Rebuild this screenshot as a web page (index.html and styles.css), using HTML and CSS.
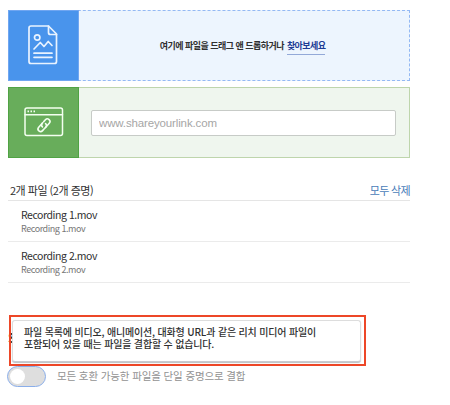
FILE: index.html
```html
<!DOCTYPE html>
<html lang="ko">
<head>
<meta charset="utf-8">
<title>파일 추가</title>
<link rel="stylesheet" href="styles.css">
</head>
<body>
<main class="panel">
  <section class="source source-file">
    <div class="source-icon">
      <svg width="30" height="40" viewBox="0 0 30 40" fill="none" stroke="#e9f3ff" stroke-width="1.7" stroke-linejoin="round" stroke-linecap="round">
        <path d="M3 1H20.500L28.500 9V36.500Q28.500 38.500 26.500 38.500H3Q1 38.500 1 36.500V3Q1 1 3 1Z"/>
        <path d="M20.500 1V7.500Q20.500 9.500 22.500 9.500H28.500"/>
        <circle cx="9.200" cy="12.500" r="2.700"/>
        <path d="M6 24L12.300 17.500L16 21.500L20.200 16.500L24 20.500M6 28.200H24M6 32.300H24"/>
      </svg>
    </div>
    <p class="drop-text"><span class="drop-label">여기에 파일을 드래그 앤 드롭하거나</span><a class="browse">찾아보세요</a></p>
  </section>
  <section class="source source-link">
    <div class="source-icon">
      <svg width="40" height="30" viewBox="0 0 40 30" fill="none" stroke="#f3fff0" stroke-width="1.500" stroke-linejoin="round" stroke-linecap="round">
        <rect x="1" y="1" width="37.500" height="27.500" rx="2"/>
        <path d="M1 7.700H38.500"/>
        <path d="M3.500 4.400H5M6.500 4.400H8M9.500 4.400H11" stroke-linecap="butt" stroke-width="1.800"/>
        <g transform="translate(20 18.200) rotate(-48)">
          <path d="M1 -2.600H-5A2.600 2.600 0 0 0 -5 2.600H-2.500M-1 2.600H0A2.600 2.600 0 0 0 2.300 0" stroke-width="1.600"/>
          <path d="M-1 2.600H5A2.600 2.600 0 0 0 5 -2.600H2.500M-2.300 0A2.600 2.600 0 0 1 0 -2.600" stroke-width="1.600"/>
        </g>
      </svg>
    </div>
    <div class="link-area"><input class="link-input" type="text" placeholder="www.shareyourlink.com"></div>
  </section>
  <header class="list-header"><span class="count">2개 파일 (2개 증명)</span><a class="delete-all">모두 삭제</a></header>
  <ul class="files">
    <li class="file"><span class="name">Recording 1.mov</span><span class="detail">Recording 1.mov</span></li>
    <li class="file"><span class="name">Recording 2.mov</span><span class="detail">Recording 2.mov</span></li>
  </ul>
  <section class="combine">
    <span class="heading">S</span>
    <div class="notice"><div class="tooltip"><span class="line">파일 목록에 비디오, 애니메이션, 대화형 URL과 같은 리치 미디어 파일이</span><span class="line">포함되어 있을 때는 파일을 결합할 수 없습니다.</span></div></div>
    <div class="option"><span class="toggle"><span class="knob"></span></span><span class="option-label">모든 호환 가능한 파일을 단일 증명으로 결합</span></div>
  </section>
</main>
</body>
</html>
```

FILE: styles.css
```css
* { box-sizing: border-box; }
body {
  margin: 0;
  background: #fff;
  color: #303030;
  font-family: "Noto Sans CJK KR", sans-serif;
  overflow: hidden;
}
.panel { width: 410px; padding: 10px 0 0 8px; }
.source { display: flex; height: 71px; }
.source-icon {
  width: 71px;
  display: flex;
  align-items: center;
  justify-content: center;
}
.source-file { background: #edf5fe; border: 1px dashed #94b9f4; border-left: 0; }
.source-file .source-icon {
  background: #4994ec;
  border: 1px solid #70a6f1;
  margin: -1px 0;
  padding-right: 1px;
  padding-bottom: 2px;
}
.drop-text {
  flex: 1;
  margin: 0;
  display: flex;
  justify-content: center;
  align-items: center;
  gap: 3px;
  padding-right: 3px;
  font-size: 9px;
  font-weight: 700;
  line-height: 15px;
  letter-spacing: -0.53px;
  white-space: nowrap;
}
.browse { color: #1d3c94; border-bottom: 1px solid #93a9d8; line-height: 16px; margin-top: 1px; letter-spacing: -0.6px; }
.source-link { margin-top: 6px; background: #eff6ee; border: 1px solid #bed5ac; border-left: 0; }
.source-link .source-icon {
  background: #68ad5b;
  border: 1px solid #50a344;
  margin: -1px 0;
  padding-bottom: 2px;
}
.link-area { flex: 1; padding: 22px 13px 0 12px; }
.link-input {
  display: block;
  width: 100%;
  height: 26px;
  border: 1px solid #c7cbc7;
  border-radius: 2px;
  padding: 0 6px 0 7px;
  background: #fff;
  font: 11.500px "Liberation Sans", sans-serif;
  letter-spacing: -0.14px;
}
.link-input::placeholder { color: #a6a6a6; opacity: 1; }
.list-header {
  display: flex;
  justify-content: space-between;
  height: 43px;
  padding: 24px 0 0 2px;
  font-size: 11px;
  line-height: 16px;
  letter-spacing: -0.5px;
  border-bottom: 1px solid #e5e5e5;
}
.delete-all { color: #4a7cb8; letter-spacing: -0.65px; }
.files { list-style: none; margin: 0; padding: 0; }
.file {
  height: 41px;
  padding: 7px 0 0 13px;
  border-bottom: 1px solid #ebebeb;
  display: flex;
  flex-direction: column;
}
.name { font-size: 10.500px; line-height: 14px; letter-spacing: -0.45px; }
.detail { font-size: 9px; line-height: 14px; letter-spacing: -0.45px; color: #777; }
.combine { position: relative; padding-top: 32px; }
.heading {
  position: absolute;
  left: 0;
  top: 46px;
  width: 5px;
  overflow: hidden;
  font-size: 13px;
  line-height: 18px;
  font-weight: 700;
  color: #222;
}
.notice {
  position: relative;
  width: 357px;
  height: 51px;
  margin-left: 1px;
  margin-bottom: -1px;
  padding: 3px 3px 2px 1px;
  border: 2px solid #ed4728;
}
.tooltip {
  height: 42px;
  padding: 5px 0 0 11px;
  border: 1px solid #ddd;
  border-bottom: 1px solid #c9ccd0;
  border-radius: 3px;
  box-shadow: 0 1px 1px #bcc0c4;
  background: #fff;
}
.line { display: block; font-size: 10px; line-height: 12px; white-space: nowrap; letter-spacing: -0.17px; font-weight: 500; }
.option { display: flex; align-items: center; gap: 11px; margin-left: -1px; height: 22px; }
.toggle {
  width: 39px;
  height: 21px;
  padding: 2px;
  border: 1px solid #8aaeea;
  border-radius: 11px;
  background: #dedede;
}
.knob { display: block; width: 15px; height: 15px; border-radius: 50%; background: #fff; }
.option-label { font-size: 10.500px; line-height: 16px; letter-spacing: -0.13px; color: #929292; white-space: nowrap; }
```
